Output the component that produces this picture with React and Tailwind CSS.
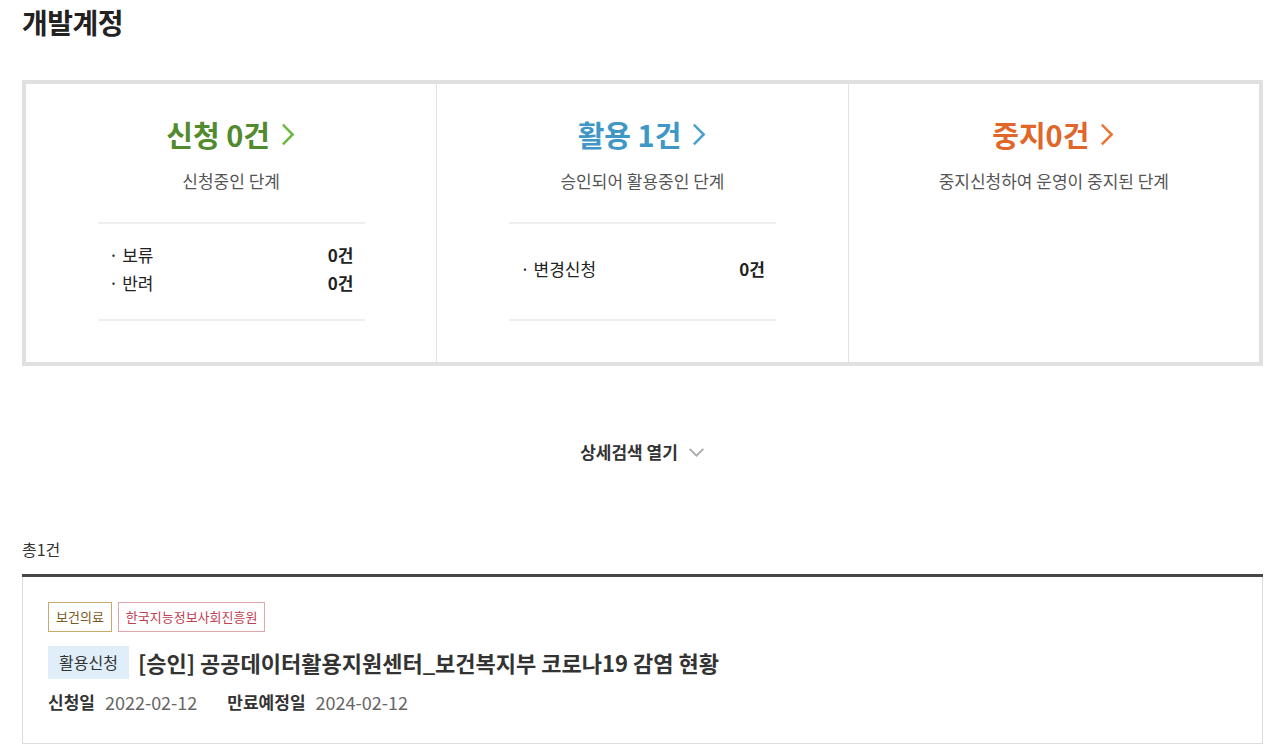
import React from "react";

const Chevron = ({ className }) => (
  <svg viewBox="0 0 14 22" className={className} fill="none" stroke="currentColor" strokeWidth="2.4" strokeLinecap="square">
    <path d="M2.5 2.5 L11 11 L2.5 19.5" />
  </svg>
);

function StatCol({ title, titleColor, chevColor, desc, items, border }) {
  return (
    <div className={`flex-1 flex flex-col items-center pt-[30px] pb-[41px] ${border ? "border-l border-[#e2e2e2]" : ""}`}>
      <div className={`flex items-center h-[40px] text-[29px] font-bold leading-[40px] ${titleColor}`}>
        <span>{title}</span>
        <Chevron className={`ml-[11px] w-[15px] h-[23px] ${chevColor}`} />
      </div>
      <div className="mt-[15px] text-[17px] leading-[24px] text-[#555]">{desc}</div>
      {items ? (
        <div className="mt-[29px] w-[65%] border-y-2 border-[#eeeeee] h-[99px] flex flex-col justify-center pb-[5px] px-[11px]">
          {items.map(([k, v]) => (
            <div key={k} className="flex justify-between text-[17px] leading-[28px] text-[#222]">
              <span>· {k}</span>
              <span className="font-bold">{v}</span>
            </div>
          ))}
        </div>
      ) : (
        <div className="mt-[29px] h-[99px]" />
      )}
    </div>
  );
}

export default function App() {
  return (
    <div className="min-h-[756px] bg-white px-[22px] text-[#333]" style={{ fontFamily: '"Noto Sans CJK KR", "Noto Sans", sans-serif' }}>
      <div className="w-[1241px]">
        <h1 className="text-[28px] font-bold leading-[44px] text-[#222] tracking-[-0.5px]">개발계정</h1>
        <div className="mt-[36px] border-4 border-[#e0e0e0] flex">
          <StatCol
            title="신청 0건"
            titleColor="text-[#528a2e]"
            chevColor="text-[#6cb644]"
            desc="신청중인 단계"
            items={[["보류", "0건"], ["반려", "0건"]]}
          />
          <StatCol
            title="활용 1건"
            titleColor="text-[#3f97c6]"
            chevColor="text-[#4a9fcc]"
            desc="승인되어 활용중인 단계"
            items={[["변경신청", "0건"]]}
            border
          />
          <StatCol
            title="중지0건"
            titleColor="text-[#e0662a]"
            chevColor="text-[#e8743a]"
            desc="중지신청하여 운영이 중지된 단계"
            border
          />
        </div>

        <div className="mt-[74px] flex justify-center items-center">
          <span className="text-[17px] font-bold leading-[24px] text-[#333]">상세검색 열기</span>
          <svg viewBox="0 0 18 12" className="ml-[10px] w-[17px] h-[11px] text-[#aaa]" fill="none" stroke="currentColor" strokeWidth="2">
            <path d="M1.5 2 L9 9.5 L16.5 2" />
          </svg>
        </div>

        <div className="mt-[73px] text-[16px] leading-[24px] text-[#333]">총1건</div>

        <div className="mt-[13px] border-t-[3px] border-[#474747]">
          <div className="border-x border-b border-[#dddddd] px-[25px] pt-[25px] pb-[29px]">
            <div className="flex gap-[6px]">
              <span className="h-[30px] px-[7px] border border-[#c9a96e] text-[#7a5a22] text-[13px] leading-[28px]">보건의료</span>
              <span className="h-[30px] px-[7px] border border-[#e3a6ae] text-[#c0404f] text-[13px] leading-[28px]">한국지능정보사회진흥원</span>
            </div>
            <div className="mt-[14px] flex items-center">
              <span className="h-[33px] px-[11px] bg-[#dfeef8] text-[#333] text-[16px] leading-[33px]">활용신청</span>
              <span className="ml-[9px] text-[22px] font-bold text-[#333] leading-[33px]">[승인] 공공데이터활용지원센터_보건복지부 코로나19 감염 현황</span>
            </div>
            <div className="mt-[11px] flex items-center text-[17px] leading-[24px]">
              <span className="font-bold text-[#333]">신청일</span>
              <span className="ml-[10px] text-[18px] text-[#666]">2022-02-12</span>
              <span className="ml-[30px] font-bold text-[#333]">만료예정일</span>
              <span className="ml-[10px] text-[18px] text-[#666]">2024-02-12</span>
            </div>
          </div>
        </div>
      </div>
    </div>
  );
}
